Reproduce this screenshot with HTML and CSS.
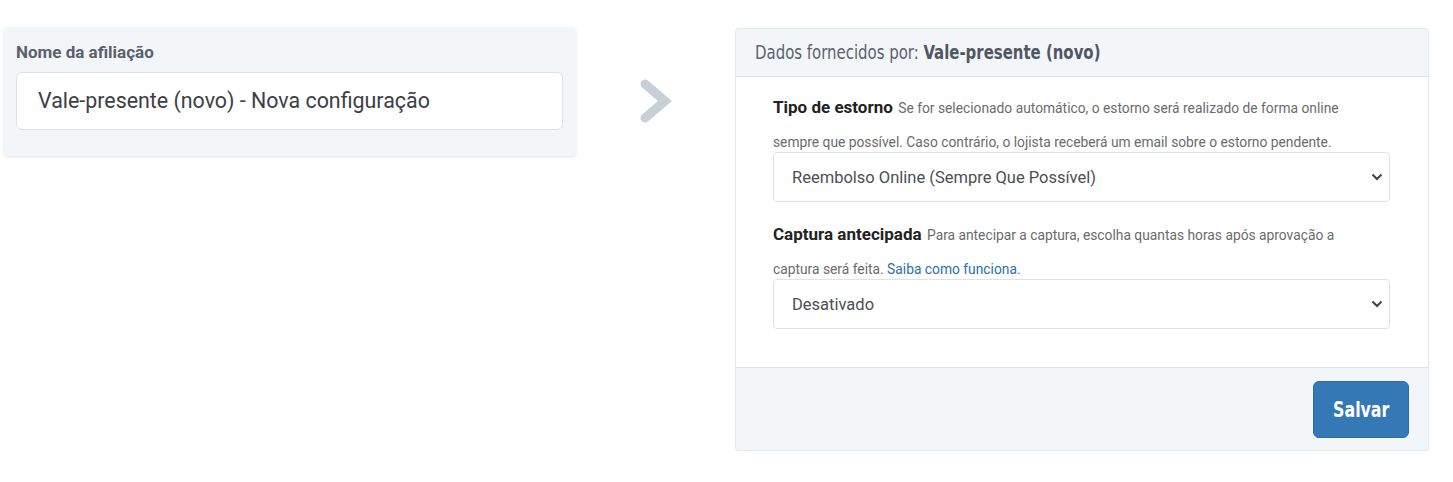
FILE: index.html
```html
<!DOCTYPE html>
<html>
<head>
  <meta charset="utf-8" />
  <title>Afiliação | Vale-presente</title>
  <link rel="stylesheet" href="styles.css">
</head>
<body>
  <div class="page">
    <!-- nome da afiliação -->
    <div class="card card-name">
      <label class="field-label">Nome da afiliação</label>
      <div class="text-input">Vale-presente (novo) - Nova configuração</div>
    </div>

    <div class="arrow">
      <svg width="40" height="52" viewBox="0 0 40 52">
        <polyline points="9,9 29,26 9,43" fill="none" stroke="#c9cfd7" stroke-width="9" stroke-linejoin="miter" stroke-linecap="round"/>
      </svg>
    </div>

    <!-- dados do provedor -->
    <div class="card card-provider">
      <div class="card-header"><span class="narrow">Dados fornecidos por: <b>Vale-presente (novo)</b></span></div>
      <div class="card-body">
        <div class="form-group">
          <div class="help"><strong>Tipo de estorno</strong> Se for selecionado automático, o estorno será realizado de forma online sempre que possível. Caso contrário, o lojista receberá um email sobre o estorno pendente.</div>
          <div class="select-box">
            <span>Reembolso Online (Sempre Que Possível)</span>
            <svg width="12" height="8" viewBox="0 0 12 8"><polyline points="1.5,1.5 6,6 10.5,1.5" fill="none" stroke="#444" stroke-width="2"/></svg>
          </div>
        </div>
        <div class="form-group">
          <div class="help"><strong>Captura antecipada</strong> Para antecipar a captura, escolha quantas horas após aprovação a captura será feita. <a href="#">Saiba como funciona</a>.</div>
          <div class="select-box">
            <span>Desativado</span>
            <svg width="12" height="8" viewBox="0 0 12 8"><polyline points="1.5,1.5 6,6 10.5,1.5" fill="none" stroke="#444" stroke-width="2"/></svg>
          </div>
        </div>
      </div>
      <div class="card-footer">
        <button class="btn"><span class="narrow">Salvar</span></button>
      </div>
    </div>
  </div>
</body>
</html>
```

FILE: styles.css
```css
* {
  margin: 0;
  padding: 0;
  box-sizing: border-box;
}

body {
  font-family: Roboto, 'Noto Sans', sans-serif;
  background: white;
  color: #222;
}

.page {
  display: flex;
  align-items: flex-start;
  padding: 27px 24px 0 4px;
}

.card {
  background: #f3f6f9;
  border-radius: 4px;
  box-shadow: 0 1px 3px rgba(0,0,0,0.12);
}

.card-name {
  width: 572px;
  padding: 14px 13px 26px 12px;
}

.field-label {
  display: block;
  font-size: 17px;
  line-height: 22px;
  font-weight: 700;
  color: #58616d;
  margin-bottom: 9px;
}

.text-input {
  height: 58px;
  background: white;
  border: 1px solid #dde2e7;
  border-radius: 6px;
  padding: 0 21px;
  font-size: 21.4px;
  line-height: 56px;
  color: #3b4046;
}

.arrow {
  flex: 1;
  display: flex;
  justify-content: center;
  padding-top: 48px;
}

.card-provider {
  width: 694px;
  margin-top: 1px;
  border: 1px solid #e3e8ed;
  box-shadow: 0 1px 2px rgba(0,0,0,0.06);
  overflow: hidden;
}

/* no condensed face installed: squeeze a condensed one a bit more */
.narrow {
  display: inline-block;
  font-family: 'DejaVu Sans Condensed', sans-serif;
  white-space: nowrap;
}

.card-header {
  height: 48px;
  padding: 0 19px;
  font-size: 20px;
  line-height: 47px;
  color: #5a6270;
  border-bottom: 1px solid #dde3e9;
}

.card-header .narrow {
  transform: scaleX(0.83);
  transform-origin: left center;
}

.card-header b {
  font-weight: 700;
  color: #4f5763;
}

.card-body {
  background: white;
  padding: 13px 38px 38px 37px;
}

.form-group + .form-group {
  margin-top: 15px;
}

.help {
  font-size: 13.8px;
  line-height: 34px;
  color: #6b6b6b;
  padding-right: 14px;
  margin-bottom: -7px;
}

.help strong {
  font-size: 17px;
  font-weight: 700;
  color: #222;
  margin-right: 2px;
}

.help a {
  color: #2e6ea8;
  text-decoration: none;
}

.select-box {
  height: 50px;
  background: white;
  border: 1px solid #dde2e7;
  border-radius: 4px;
  padding: 0 6px 0 18px;
  display: flex;
  align-items: center;
  justify-content: space-between;
  font-size: 16.5px;
  color: #4a4f55;
}

.card-footer {
  height: 83px;
  border-top: 1px solid #dde3e9;
  display: flex;
  justify-content: flex-end;
  padding: 13px 19px 0 0;
}

.btn {
  width: 96px;
  height: 57px;
  background: #3478b5;
  border: 1px solid #2d6ca5;
  border-radius: 6px;
  color: white;
  font-size: 22px;
  font-weight: 700;
  cursor: pointer;
}

.btn .narrow {
  transform: scaleX(0.8);
}
```
